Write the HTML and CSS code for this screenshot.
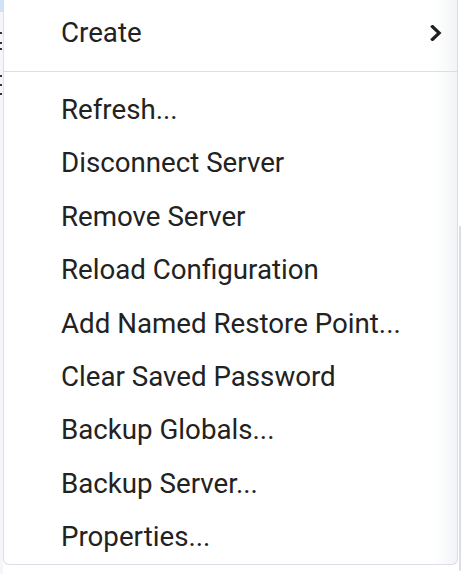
FILE: index.html
```html
<!DOCTYPE html>
<html>
<head>
<meta charset="utf-8">
<link rel="stylesheet" href="styles.css">
</head>
<body>
<div class="page">
  <div class="backdrop-left">
    <div class="bd-blue"></div>
    <div class="bd-marks">
      <span class="mark m1"></span><span class="mark m2"></span><span class="mark m3"></span>
      <span class="mark m4"></span><span class="mark m5"></span><span class="mark m6"></span>
    </div>
  </div>
  <div class="menu">
    <div class="item has-sub">
      <span class="label">Create</span>
      <svg class="chev" width="12" height="16" viewBox="0 0 12 16"><path d="M2.5 1.6 L9.2 8 L2.5 14.4" fill="none" stroke="#1f1f1f" stroke-width="3.2" stroke-linecap="square" stroke-linejoin="miter"/></svg>
    </div>
    <div class="sep"></div>
    <div class="item"><span class="label">Refresh...</span></div>
    <div class="item"><span class="label">Disconnect Server</span></div>
    <div class="item"><span class="label">Remove Server</span></div>
    <div class="item"><span class="label">Reload Configuration</span></div>
    <div class="item"><span class="label">Add Named Restore Point...</span></div>
    <div class="item"><span class="label">Clear Saved Password</span></div>
    <div class="item"><span class="label">Backup Globals...</span></div>
    <div class="item"><span class="label">Backup Server...</span></div>
    <div class="item"><span class="label">Properties...</span></div>
  </div>
  <div class="backdrop-right"></div>
</div>
</body>
</html>
```

FILE: styles.css
```css
html, body {
  margin: 0;
  padding: 0;
  background: #ffffff;
  overflow: hidden;
}
.page {
  display: flex;
  width: 464px;
  height: 574px;
  font-family: Roboto, "Liberation Sans", sans-serif;
}
.backdrop-left {
  width: 3px;
  flex: none;
  background: #f4f6f9;
  display: flex;
  flex-direction: column;
}
.bd-blue {
  height: 12px;
  background: #cfe3f5;
}
.bd-marks {
  position: relative;
  flex: 1;
}
.mark {
  position: absolute;
  left: 0;
  width: 2px;
  height: 2px;
  background: #333;
}
.m1 { top: 20px; }
.m2 { top: 30px; }
.m3 { top: 36px; }
.m4 { top: 63px; }
.m5 { top: 72px; }
.m6 { top: 81px; }
.menu {
  width: 455px;
  height: 565px;
  flex: none;
  box-sizing: border-box;
  padding-top: 6px;
  border: 1px solid #dcdee5;
  border-top: none;
  border-radius: 0 0 6px 6px;
  background: linear-gradient(to right, #ffffff 0, #ffffff 430px, #f3f4f7 100%);
  color: #222222;
  font-size: 27.7px;
}
.item {
  height: 53.4px;
  display: flex;
  align-items: center;
  padding-left: 57px;
  padding-right: 15px;
}
.item .label {
  flex: 1;
  line-height: 32px;
}
.chev {
  flex: none;
}
.sep {
  height: 1px;
  background: #dcdee5;
  margin: 12px 0 11px 0;
}
.backdrop-right {
  flex: 1;
  display: flex;
  padding-top: 226px;
  padding-left: 1px;
}
.backdrop-right::before {
  content: "";
  width: 2px;
  height: 345px;
  background: #dcdee5;
  border-radius: 0 0 2px 2px;
}
```
